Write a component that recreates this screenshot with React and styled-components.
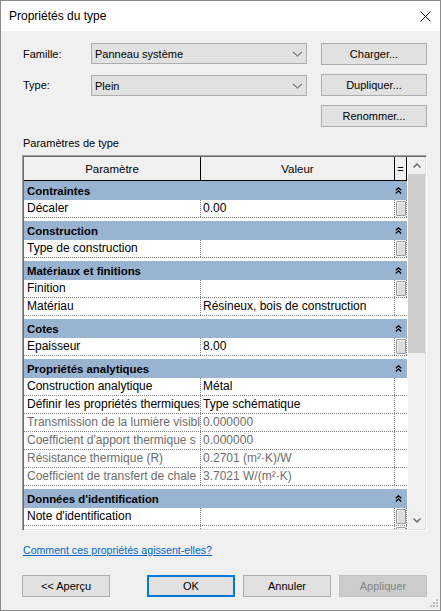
import React from 'react';
import styled, { createGlobalStyle, css } from 'styled-components';

const FONT = `"Liberation Sans", Arial, sans-serif`;

const Global = createGlobalStyle`
  html, body { margin: 0; padding: 0; background: #f0f0f0; }
  body { font-family: ${FONT}; font-size: 11px; color: #000; }
  * { box-sizing: border-box; }
`;

const Window = styled.div`
  position: relative;
  width: 441px;
  height: 611px;
  border: 1px solid #8a8a8a;
  background: #f0f0f0;
  display: flex;
  flex-direction: column;
  overflow: hidden;
`;

const TitleBar = styled.div`
  height: 30px;
  flex: none;
  background: #fff;
  display: flex;
  align-items: center;
  justify-content: space-between;
  padding: 0 9px 0 8px;
  font-size: 12px;
`;

const Body = styled.div`
  flex: 1;
  display: flex;
  flex-direction: column;
  padding: 12px 13px 0 21px;
`;

const Form = styled.div`
  display: grid;
  grid-template-columns: 69px 216px 1fr;
  grid-auto-rows: 22px;
  row-gap: 9px;
  column-gap: 0;
`;

const Label = styled.div`
  display: flex;
  align-items: center;
  padding-left: 1px;
`;

const Combo = styled.div`
  height: 21px;
  align-self: ${p => (p.$low ? 'end' : 'start')};
  background: #e1e1e1;
  border: 1px solid #adadad;
  display: flex;
  align-items: center;
  justify-content: space-between;
  padding: 0 3px 0 3px;
`;

const SideButton = styled.button`
  grid-column: 3;
  margin-left: 14px;
  height: 22px;
  background: #e1e1e1;
  border: 1px solid #adadad;
  font-family: ${FONT};
  font-size: 11px;
  color: #000;
  padding: 0;
`;

const SectionLabel = styled.div`
  margin-top: 9px;
  line-height: 14px;
  padding-left: 1px;
`;

const Frame = styled.div`
  margin-top: 5px;
  height: 376px;
  display: flex;
  background: #fff;
  border: 1px solid;
  border-color: #a0a0a0 #ffffff #ffffff #a0a0a0;
  box-shadow: inset 1px 1px 0 #696969, inset -1px -1px 0 #e3e3e3;
  padding: 1px;
`;

const GridArea = styled.div`
  width: 383px;
  margin-right: 1px;
  overflow: hidden;
  display: flex;
  flex-direction: column;
`;

const cols = css`
  display: grid;
  grid-template-columns: 177px 194px 12px;
`;

const HeaderRow = styled.div`
  ${cols};
  flex: none;
  height: 24px;
  background: #f0f0f0;
`;

const HeaderCell = styled.div`
  border-bottom: 1px solid #000;
  border-right: 1px solid #000;
  display: flex;
  align-items: center;
  justify-content: center;
  font-size: ${p => (p.$small ? '11px' : '11.5px')};
`;

const GroupRow = styled.div`
  flex: none;
  height: 19px;
  margin-top: ${p => (p.$first ? '0' : '3px')};
  background: #99b4d1;
  display: flex;
  align-items: center;
  justify-content: space-between;
  padding: 0 5px 0 3px;
  font-weight: bold;
  font-size: 11.4px;
`;

const DataRow = styled.div`
  ${cols};
  flex: none;
  height: 18px;
  border-bottom: 1px dotted #808080;
  color: ${p => (p.$dim ? '#6d6d6d' : '#000')};
  font-size: 12px;
`;

const Cell = styled.div`
  line-height: 17px;
  white-space: nowrap;
  overflow: hidden;
  padding-left: ${p => p.$pad}px;
  border-right: 1px dotted #808080;
`;

const EqCell = styled.div`
  display: flex;
  padding: 1px 0 1px 1px;
  border-right: ${p => (p.$btn ? '1px dotted #808080' : 'none')};
`;

const MiniButton = styled.div`
  width: 10px;
  height: 15px;
  background: #dcdcdc;
  border: 1px solid #9a9a9a;
  border-radius: 1px;
  box-shadow: inset 1px 1px 0 #f4f4f4;
`;

const ScrollBar = styled.div`
  width: 17px;
  background: #f0f0f0;
  display: flex;
  flex-direction: column;
`;

const ScrollArrow = styled.div`
  height: 17px;
  flex: none;
  display: flex;
  align-items: center;
  justify-content: center;
`;

const Thumb = styled.div`
  height: 179px;
  flex: none;
  background: #cdcdcd;
`;

const Track = styled.div`
  flex: 1;
`;

const HelpLink = styled.a`
  margin-top: 12px;
  line-height: 14px;
  font-size: 10.6px;
  color: #0066cc;
  text-decoration: underline;
  cursor: pointer;
  align-self: flex-start;
  padding-left: 1px;
`;

const Footer = styled.div`
  margin-top: 18px;
  display: flex;
  justify-content: space-between;
`;

const FooterGroup = styled.div`
  display: flex;
  gap: 8px;
`;

const DlgButton = styled.button`
  width: 88px;
  height: 22px;
  padding: 0;
  font-family: ${FONT};
  font-size: 11px;
  background: ${p => (p.$disabled ? '#cccccc' : '#e1e1e1')};
  color: ${p => (p.$disabled ? '#838383' : '#000')};
  border: ${p =>
    p.$default ? '2px solid #0078d7' : p.$disabled ? '1px solid #bfbfbf' : '1px solid #adadad'};
`;

const Grip = styled.svg`
  position: absolute;
  right: 2px;
  bottom: 3px;
`;

const CloseIcon = () => (
  <svg width="11" height="11" viewBox="0 0 11 11">
    <path d="M0.5 0.5 L10.5 10.5 M10.5 0.5 L0.5 10.5" stroke="#000" strokeWidth="1" fill="none" />
  </svg>
);

const ComboChevron = () => (
  <svg width="11" height="6" viewBox="0 0 11 6">
    <polyline points="1,0.8 5.5,5 10,0.8" stroke="#404040" strokeWidth="1" fill="none" />
  </svg>
);

const Collapse = () => (
  <svg width="7" height="7" viewBox="0 0 7 7">
    <polyline points="0.8,3.3 3.5,0.7 6.2,3.3" stroke="#000" strokeWidth="1.2" fill="none" />
    <polyline points="0.8,6.5 3.5,3.9 6.2,6.5" stroke="#000" strokeWidth="1.2" fill="none" />
  </svg>
);

const Arrow = ({ down }) => (
  <svg width="8" height="5" viewBox="0 0 8 5">
    <polyline
      points={down ? '0.5,0.5 4,4 7.5,0.5' : '0.5,4.5 4,1 7.5,4.5'}
      stroke="#606060"
      strokeWidth="1.3"
      fill="none"
    />
  </svg>
);

const groups = [
  { title: 'Contraintes', rows: [{ p: 'Décaler', v: '0.00', btn: true }] },
  { title: 'Construction', rows: [{ p: 'Type de construction', v: '', btn: true }] },
  {
    title: 'Matériaux et finitions',
    rows: [
      { p: 'Finition', v: '', btn: true },
      { p: 'Matériau', v: 'Résineux, bois de construction' },
    ],
  },
  { title: 'Cotes', rows: [{ p: 'Epaisseur', v: '8.00', btn: true }] },
  {
    title: 'Propriétés analytiques',
    rows: [
      { p: 'Construction analytique', v: 'Métal' },
      { p: 'Définir les propriétés thermiques', v: 'Type schématique' },
      { p: 'Transmission de la lumière visibl', v: '0.000000', dim: true },
      { p: "Coefficient d'apport thermique s", v: '0.000000', dim: true },
      { p: 'Résistance thermique (R)', v: '0.2701 (m²·K)/W', dim: true },
      { p: 'Coefficient de transfert de chale', v: '3.7021 W/(m²·K)', dim: true },
    ],
  },
  {
    title: "Données d'identification",
    rows: [
      { p: "Note d'identification", v: '', btn: true },
      { p: 'Modèle', v: '', btn: true },
    ],
  },
];

export default function App() {
  return (
    <>
      <Global />
      <Window>
        <TitleBar>
          <span>Propriétés du type</span>
          <CloseIcon />
        </TitleBar>
        <Body>
          <Form>
            <Label>Famille:</Label>
            <Combo>
              <span>Panneau système</span>
              <ComboChevron />
            </Combo>
            <SideButton>Charger...</SideButton>
            <Label>Type:</Label>
            <Combo $low>
              <span>Plein</span>
              <ComboChevron />
            </Combo>
            <SideButton>Dupliquer...</SideButton>
            <SideButton>Renommer...</SideButton>
          </Form>
          <SectionLabel>Paramètres de type</SectionLabel>
          <Frame>
            <GridArea>
              <HeaderRow>
                <HeaderCell>Paramètre</HeaderCell>
                <HeaderCell>Valeur</HeaderCell>
                <HeaderCell $small>=</HeaderCell>
              </HeaderRow>
              {groups.map((g, gi) => (
                <React.Fragment key={g.title}>
                  <GroupRow $first={gi === 0}>
                    <span>{g.title}</span>
                    <Collapse />
                  </GroupRow>
                  {g.rows.map(r => (
                    <DataRow key={r.p} $dim={r.dim}>
                      <Cell $pad={3}>{r.p}</Cell>
                      <Cell $pad={2}>{r.v}</Cell>
                      <EqCell $btn={r.btn}>{r.btn && <MiniButton />}</EqCell>
                    </DataRow>
                  ))}
                </React.Fragment>
              ))}
            </GridArea>
            <ScrollBar>
              <ScrollArrow>
                <Arrow />
              </ScrollArrow>
              <Thumb />
              <Track />
              <ScrollArrow>
                <Arrow down />
              </ScrollArrow>
            </ScrollBar>
          </Frame>
          <HelpLink>Comment ces propriétés agissent-elles?</HelpLink>
          <Footer>
            <DlgButton>&lt;&lt; Aperçu</DlgButton>
            <FooterGroup>
              <DlgButton $default>OK</DlgButton>
              <DlgButton>Annuler</DlgButton>
              <DlgButton $disabled>Appliquer</DlgButton>
            </FooterGroup>
          </Footer>
        </Body>
        <Grip width="8" height="8" viewBox="0 0 8 8">
          <rect x="6" y="0" width="2" height="2" fill="#bdbdbd" />
          <rect x="3" y="3" width="2" height="2" fill="#bdbdbd" />
          <rect x="6" y="3" width="2" height="2" fill="#bdbdbd" />
          <rect x="0" y="6" width="2" height="2" fill="#bdbdbd" />
          <rect x="3" y="6" width="2" height="2" fill="#bdbdbd" />
          <rect x="6" y="6" width="2" height="2" fill="#bdbdbd" />
        </Grip>
      </Window>
    </>
  );
}
